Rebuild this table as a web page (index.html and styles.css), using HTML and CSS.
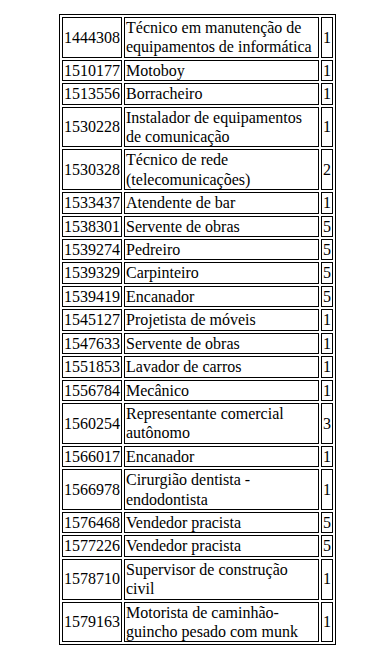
FILE: index.html
```html
<!DOCTYPE html>
<html lang="pt">
<head>
<meta charset="utf-8">
<title>Tabela</title>
<link rel="stylesheet" href="styles.css">
</head>
<body>
<table class="grid">
<tr><td class="c1">1444308</td><td class="c2">Técnico em manutenção de equipamentos de informática</td><td class="c3">1</td></tr>
<tr><td class="c1">1510177</td><td class="c2">Motoboy</td><td class="c3">1</td></tr>
<tr><td class="c1">1513556</td><td class="c2">Borracheiro</td><td class="c3">1</td></tr>
<tr><td class="c1">1530228</td><td class="c2">Instalador de equipamentos de comunicação</td><td class="c3">1</td></tr>
<tr><td class="c1">1530328</td><td class="c2">Técnico de rede (telecomunicações)</td><td class="c3">2</td></tr>
<tr><td class="c1">1533437</td><td class="c2">Atendente de bar</td><td class="c3">1</td></tr>
<tr><td class="c1">1538301</td><td class="c2">Servente de obras</td><td class="c3">5</td></tr>
<tr><td class="c1">1539274</td><td class="c2">Pedreiro</td><td class="c3">5</td></tr>
<tr><td class="c1">1539329</td><td class="c2">Carpinteiro</td><td class="c3">5</td></tr>
<tr><td class="c1">1539419</td><td class="c2">Encanador</td><td class="c3">5</td></tr>
<tr><td class="c1">1545127</td><td class="c2">Projetista de móveis</td><td class="c3">1</td></tr>
<tr><td class="c1">1547633</td><td class="c2">Servente de obras</td><td class="c3">1</td></tr>
<tr><td class="c1">1551853</td><td class="c2">Lavador de carros</td><td class="c3">1</td></tr>
<tr><td class="c1">1556784</td><td class="c2">Mecânico</td><td class="c3">1</td></tr>
<tr><td class="c1">1560254</td><td class="c2">Representante comercial autônomo</td><td class="c3">3</td></tr>
<tr><td class="c1">1566017</td><td class="c2">Encanador</td><td class="c3">1</td></tr>
<tr><td class="c1">1566978</td><td class="c2">Cirurgião dentista - endodontista</td><td class="c3">1</td></tr>
<tr><td class="c1">1576468</td><td class="c2">Vendedor pracista</td><td class="c3">5</td></tr>
<tr><td class="c1">1577226</td><td class="c2">Vendedor pracista</td><td class="c3">5</td></tr>
<tr><td class="c1">1578710</td><td class="c2">Supervisor de construção civil</td><td class="c3">1</td></tr>
<tr><td class="c1">1579163</td><td class="c2">Motorista de caminhão-guincho pesado com munk</td><td class="c3">1</td></tr>
</table>
</body>
</html>
```
FILE: styles.css
```css
html, body {
  margin: 0;
  background: #ffffff;
}
body {
  padding: 14px 0 0 59px;
  font-family: "Liberation Serif", "Times New Roman", serif;
  font-size: 16px;
  line-height: 19.4px;
  color: #000000;
}
.grid {
  border: 1px solid #000000;
  border-collapse: separate;
  border-spacing: 2px;
  table-layout: fixed;
}
.grid td {
  border: 1px solid #000000;
  padding: 0 1px;
  vertical-align: middle;
  text-align: left;
  overflow: hidden;
}
.c1 { width: 56px; }
.c2 { width: 191px; }
.c3 { width: 8px; }
```
